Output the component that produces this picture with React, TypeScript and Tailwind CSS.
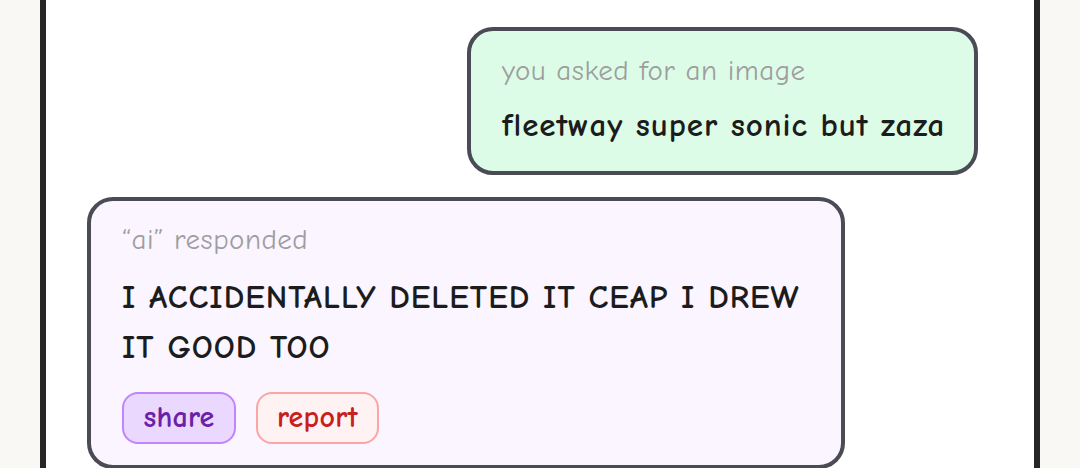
const font = { fontFamily: '"Comic Neue", "Comic Sans MS", "Noto Sans", sans-serif' };

export default function App() {
  return (
    <div className="h-[468px] overflow-hidden bg-[#f9f8f5]" style={font}>
      <div className="mx-[40px] h-[520px] border-x-[6px] border-[#262626] bg-white">
        <div className="flex flex-col pt-[27px]">
          {/* user message */}
          <div className="flex justify-end pr-[56px]">
            <div className="w-[511px] rounded-[26px] border-[4px] border-[#4b4b55] bg-[#dcfce7] px-[31px] pt-[24px] pb-[26px]">
              <div className="text-[29px] leading-[32px] tracking-[0.5px] text-[#9e9e9e]">you asked for an image</div>
              <div className="mt-[18px] whitespace-nowrap text-[33px] font-bold leading-[40px] tracking-[0.9px] text-[#1c1c1c]">
                fleetway super sonic but zaza
              </div>
            </div>
          </div>

          {/* ai reply */}
          <div className="mt-[22px] flex pl-[41px]">
            <div className="w-[758px] rounded-[26px] border-[4px] border-[#4b4b55] bg-[#faf5ff] px-[31px] pt-[23px] pb-[21px]">
              <div className="text-[29px] leading-[32px] tracking-[0.5px] text-[#9e9e9e]">“ai” responded</div>
              <div className="mt-[16px] text-[33px] font-bold leading-[50px] tracking-[1px] text-[#1c1c1c]">
                I ACCIDENTALLY DELETED IT CEAP I DREW IT GOOD TOO
              </div>
              <div className="mt-[20px] flex gap-[20px]">
                <button className="h-[52px] w-[114px] rounded-[16px] border-2 border-[#c084fc] bg-[#ead8fe] text-[30px] font-bold leading-[48px] tracking-[0.3px] text-[#6b21a8]">
                  share
                </button>
                <button className="h-[52px] w-[123px] rounded-[16px] border-2 border-[#fca5a5] bg-[#fef2f2] text-[30px] font-bold leading-[48px] tracking-[0.3px] text-[#c81e1e]">
                  report
                </button>
              </div>
            </div>
          </div>
        </div>
      </div>
    </div>
  );
}
